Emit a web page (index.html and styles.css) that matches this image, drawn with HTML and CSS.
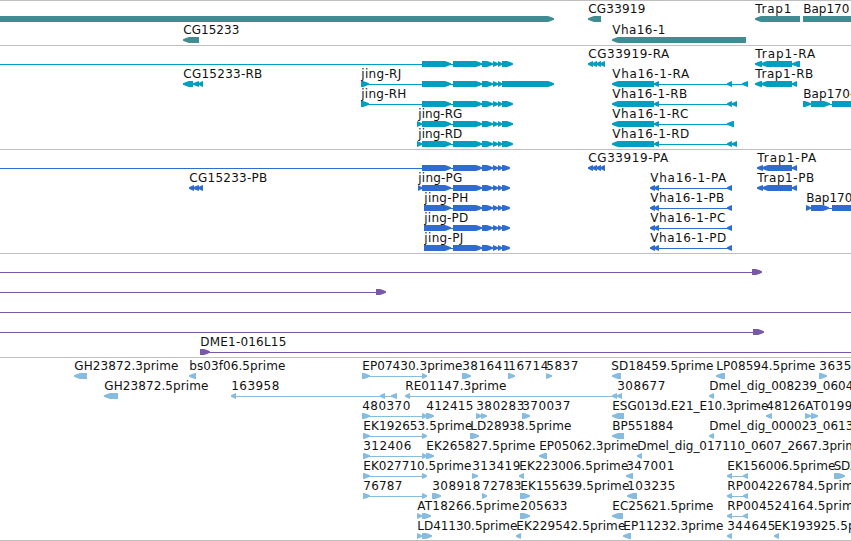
FILE: index.html
```html
<!DOCTYPE html>
<html>
<head>
    <meta charset="UTF-8">
    <title>Genome browser</title>
    <link rel="stylesheet" href="styles.css">
</head>
<body>
    <div id="browser">
        <svg class="track gene" id="gene"></svg>
        <svg class="track mrna" id="mrna"></svg>
        <svg class="track cds" id="cds"></svg>
        <svg class="track bac" id="bac"></svg>
        <svg class="track est" id="est"></svg>
    </div>
    <script src="tracks.js"></script>
</body>
</html>
```
FILE: styles.css
```css
body {
    margin: 0;
    background: #fff;
    overflow: hidden;
}

#browser {
    display: flex;
    flex-direction: column;
    width: 851px;
    border-bottom: 1px solid #bfbfbf;
}

.track {
    display: block;
    box-sizing: border-box;
    width: 100%;
    height: 104px;
    border-top: 1px solid #bfbfbf;
    overflow: hidden;
}

.track text {
    font-family: "DejaVu Sans", sans-serif;
    font-size: 12px;
    fill: #111;
}

.gene {
    height: 45px;
    fill: #408c93;
}

.mrna {
    fill: #009ebf;
}

.cds {
    fill: #306ccf;
}

.bac {
    fill: #7759a8;
}

.est {
    height: 183px;
    fill: #87bcde;
}
```
FILE: tracks.js
```js
const NS = 'http://www.w3.org/2000/svg';
const BAR = 6;
const HEAD = 6;

// feature: [row, strand, blocks, label, label start, label end]
// a block is [start, end] and points along the strand
const jing = [[453, 482], [482, 493], [493, 498], [498, 502]];
const jingR = [[422, 451], ...jing, [502, 513]];
const jingP = [[424, 451], ...jing, [502, 510]];
const cg33919 = [[588, 593], [592, 597], [596, 601], [600, 605]];
const vhaB = [[612, 654], [654, 659], [727, 732], [732, 737]];
const vhaP = [[650, 655], [654, 659], [727, 732]];
const ek = [[363, 370], [422, 427]];
const rp = [[727, 732], [743, 748]];

const tracks = {
    gene: [
        [0, '+', [[-10, 554]]],
        [1, '-', [[183, 199]], 'CG15233', 183, 239],
        [0, '-', [[588, 601]], 'CG33919', 588, 645],
        [1, '-', [[612, 746]], 'Vha16-1', 612, 665],
        [0, '-', [[755, 800]], 'Trap1', 755, 791],
        [0, '+', [[803, 900]], 'Bap170', 803, 849]
    ],
    mrna: [
        [0, '+', [[-20, -10], ...jingR]],
        [1, '-', [[183, 193], [193, 199], [198, 203]], 'CG15233-RB', 183, 262],
        [1, '+', [[361, 369], [422, 451], ...jing, [502, 554]], 'jing-RJ', 361, 401],
        [2, '+', [[361, 369], ...jingR], 'jing-RH', 361, 406],
        [3, '+', [[417, 422], ...jingR], 'jing-RG', 418, 462],
        [4, '+', [[417, 422], ...jingR], 'jing-RD', 418, 462],
        [0, '-', cg33919, 'CG33919-RA', 588, 669],
        [1, '-', [[612, 654], [654, 659], [727, 732], [742, 748]], 'Vha16-1-RA', 612, 689],
        [2, '-', vhaB, 'Vha16-1-RB', 612, 687],
        [3, '-', [[612, 654], [654, 659], [727, 734]], 'Vha16-1-RC', 612, 688],
        [4, '-', vhaB, 'Vha16-1-RD', 612, 689],
        [0, '-', [[755, 762], [761, 792], [792, 800]], 'Trap1-RA', 755, 815],
        [1, '-', [[755, 762], [761, 792], [792, 797]], 'Trap1-RB', 755, 813],
        [2, '+', [[803, 811], [811, 830], [832, 900]], 'Bap170-', 803, 854]
    ],
    cds: [
        [0, '+', [[-20, -10], [422, 451], ...jing, [502, 510]]],
        [1, '-', [[189, 194], [193, 199], [198, 203]], 'CG15233-PB', 189, 267],
        [1, '+', [[418, 422], [422, 451], ...jing, [502, 510]], 'jing-PG', 418, 462],
        [2, '+', jingP, 'jing-PH', 424, 468],
        [3, '+', jingP, 'jing-PD', 424, 468],
        [4, '+', jingP, 'jing-PJ', 424, 463],
        [0, '-', cg33919, 'CG33919-PA', 588, 668],
        [1, '-', vhaP, 'Vha16-1-PA', 650, 726],
        [2, '-', vhaP, 'Vha16-1-PB', 650, 724],
        [3, '-', vhaP, 'Vha16-1-PC', 650, 725],
        [4, '-', vhaP, 'Vha16-1-PD', 650, 726],
        [0, '-', [[757, 763], [762, 792], [792, 797]], 'Trap1-PA', 757, 816],
        [1, '-', [[757, 763], [762, 792], [792, 797]], 'Trap1-PB', 757, 814],
        [2, '+', [[806, 811], [811, 829], [832, 900]], 'Bap170', 806, 852]
    ],
    bac: [
        [0, '+', [[-20, -10], [752, 762]]],
        [1, '+', [[-20, -10], [376, 386]]],
        [2, '+', [[-20, -10], [880, 890]]],
        [3, '+', [[-20, -10], [753, 764]]],
        [4, '+', [[200, 210], [880, 890]], 'DME1-016L15', 200, 286]
    ],
    est: [
        [0, '-', [[74, 87]], 'GH23872.3prime', 74, 178],
        [0, '-', [[189, 196]], 'bs03f06.5prime', 189, 285],
        [0, '+', [[362, 370], [422, 427]], 'EP07430.3prime', 362, 462],
        [0, '+', [[462, 471]], '381641', 462, 510],
        [0, '+', [[508, 515]], '16714', 508, 548],
        [0, '+', [[546, 552]], '5837', 546, 578],
        [0, '-', [[612, 621]], 'SD18459.5prime', 611, 713],
        [0, '-', [[716, 725]], 'LP08594.5prime', 716, 815],
        [0, '+', [[819, 827]], '3635', 819, 851],

        [1, '-', [[104, 118]], 'GH23872.5prime', 104, 208],
        [1, '-', [[231, 236], [380, 385], [391, 397]], '163958', 231, 279],
        [1, '-', [[405, 410], [612, 617], [617, 622]], 'RE01147.3prime', 405, 506],
        [1, '-', [], '308677', 617, 665],
        [1, '-', [[709, 714]], 'Dmel_dig_008239_0604', 709, 853],

        [2, '+', [[362, 370], [422, 427]], '480370', 362, 410],
        [2, '+', [[426, 434]], '412415', 426, 473],
        [2, '+', [[476, 482], [481, 487]], '380283', 476, 524],
        [2, '+', [[522, 530]], '370037', 522, 570],
        [2, '-', [[612, 624]], 'ESG013d.E21_E10.3prime', 612, 768],
        [2, '-', [[766, 772]], '48126', 766, 805],
        [2, '+', [[805, 811], [811, 818]], 'AT0199', 805, 852],

        [3, '+', ek, 'EK192653.5prime', 363, 472],
        [3, '+', [[470, 479]], 'LD28938.5prime', 470, 571],
        [3, '-', [[612, 624]], 'BP551884', 612, 673],
        [3, '-', [[709, 714]], 'Dmel_dig_000023_0613', 709, 853],

        [4, '+', ek, '312406', 363, 411],
        [4, '+', [[426, 434]], 'EK265827.5prime', 426, 535],
        [4, '-', [[539, 547]], 'EP05062.3prime', 539, 638],
        [4, '-', [[637, 642]], 'Dmel_dig_017110_0607_2667.3prime', 637, 864],

        [5, '+', ek, 'EK027710.5prime', 363, 471],
        [5, '+', [[472, 478]], '313419', 472, 520],
        [5, '-', [[519, 524]], 'EK223006.5prime', 519, 628],
        [5, '-', [[626, 633]], '347001', 626, 674],
        [5, '-', rp, 'EK156006.5prime', 727, 835],
        [5, '+', [[834, 845]], 'SD2', 833.5, 857],

        [6, '+', ek, '76787', 363, 402],
        [6, '+', [[432, 441]], '308918', 432, 480],
        [6, '+', [[482, 487]], '72783', 482, 521],
        [6, '+', [[520, 530]], 'EK155639.5prime', 520, 629],
        [6, '-', [[627, 637]], '103235', 627, 675],
        [6, '-', rp, 'RP004226784.5prime', 727, 861],

        [7, '+', [[417, 422], [422, 431]], 'AT18266.5prime', 417, 519],
        [7, '+', [[520, 530]], '205633', 520, 567],
        [7, '-', [[612, 623]], 'EC25621.5prime', 612, 713],
        [7, '-', rp, 'RP004524164.5prime', 727, 861],

        [8, '+', [[417, 422], [422, 432]], 'LD41130.5prime', 417, 517],
        [8, '-', [[516, 521]], 'EK229542.5prime', 516, 625],
        [8, '-', [[623, 631]], 'EP11232.3prime', 623, 723],
        [8, '-', [[727, 732]], '344645', 727, 775],
        [8, '-', [[774, 779]], 'EK193925.5prime', 774, 883]
    ]
};

function add(svg, tag, attrs) {
    const el = document.createElementNS(NS, tag);
    for (const key in attrs) {
        el.setAttribute(key, attrs[key]);
    }
    svg.appendChild(el);
    return el;
}

function drawBlock(svg, strand, start, end, y) {
    const head = Math.min(HEAD, end - start);
    const dir = strand === '+' ? 1 : -1;
    const tip = strand === '+' ? end : start;
    const back = strand === '+' ? start : end;
    const neck = tip - dir * head;
    const bend = tip - dir * head / 2;
    const mid = y + BAR / 2;
    add(svg, 'polygon', {
        points: [
            [back, y], [neck, y], [bend, y + 1], [tip, mid - 0.7],
            [tip, mid + 0.7], [bend, y + BAR - 1], [neck, y + BAR], [back, y + BAR]
        ].join(' ')
    });
}

function drawTrack(id, features) {
    const svg = document.getElementById(id);
    const pitch = id === 'gene' ? 21 : 20;

    features.forEach(([row, strand, blocks, label, from, to]) => {
        const y = 15 + row * pitch;
        if (blocks.length > 1) {
            const x1 = blocks[0][0] + 2;
            const x2 = blocks[blocks.length - 1][1] - 3;
            add(svg, 'rect', { x: x1, y: y + 3, width: x2 - x1, height: 1 });
        }
        blocks.forEach(([start, end]) => drawBlock(svg, strand, start, end, y));
        if (label) {
            add(svg, 'text', { x: from + 0.3, y: y - 3, textLength: to - from }).textContent = label;
        }
    });
}

Object.keys(tracks).forEach(id => drawTrack(id, tracks[id]));
```
